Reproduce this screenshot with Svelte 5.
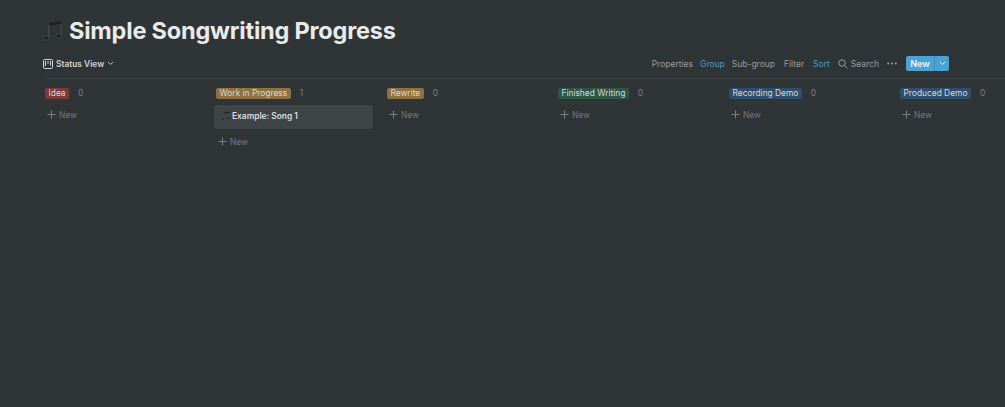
<script>
  let columns = [
    { name: "Idea", color: "#7b3a3c", cards: [] },
    { name: "Work in Progress", color: "#8d7140", cards: ["Example: Song 1"] },
    { name: "Rewrite", color: "#8d7140", cards: [] },
    { name: "Finished Writing", color: "#2f5546", cards: [] },
    { name: "Recording Demo", color: "#2f4d6e", cards: [] },
    { name: "Produced Demo", color: "#2f4d6e", cards: [] }
  ];
  let tools = [
    { label: "Properties" },
    { label: "Group", on: true },
    { label: "Sub-group", wide: true },
    { label: "Filter", wide: true },
    { label: "Sort", on: true }
  ];
</script>

{#snippet note(size)}
  <svg width={size} height={size} viewBox="0 0 24 24">
    <path d="M7.5 19V4.5M21 17V2.5" fill="none" stroke="#4c5053" stroke-width="1.1" />
    <path d="M7.5 3.2L21 1.2v3L7.5 6.2z" fill="#241f1f" />
    <ellipse cx="4.8" cy="19.6" rx="3.2" ry="2.4" fill="#202326" stroke="#5c6064" stroke-width=".6" />
    <ellipse cx="18.2" cy="17.6" rx="3.2" ry="2.4" fill="#202326" stroke="#5c6064" stroke-width=".6" />
  </svg>
{/snippet}

<div class="page">
  <h1><span class="emoji">{@render note(22)}</span>Simple Songwriting Progress</h1>

  <div class="bar">
    <div class="view">
      <svg width="10" height="10" viewBox="0 0 10 10">
        <rect x=".5" y=".5" width="9" height="9" rx="1.2" fill="none" stroke="#d6d7d8" />
        <path d="M2.5 2v5M5 2v3M7.5 2v4.5" stroke="#d6d7d8" fill="none" />
      </svg>
      <span>Status View</span>
      <svg width="7" height="5" viewBox="0 0 7 5"><path d="M1 1l2.5 2.5L6 1" fill="none" stroke="#b8babb" /></svg>
    </div>
    <div class="tools">
      {#each tools as t}
        <span class="tool" class:on={t.on} class:wide={t.wide}>{t.label}</span>
      {/each}
      <span class="search">
        <svg width="10" height="10" viewBox="0 0 10 10">
          <circle cx="4" cy="4" r="3.2" fill="none" stroke="#9a9c9e" />
          <path d="M6.4 6.4L9.5 9.5" stroke="#9a9c9e" />
        </svg>
        Search
      </span>
      <svg class="dots" width="10" height="3" viewBox="0 0 10 3">
        <circle cx="1.2" cy="1.5" r="1" fill="#a3a5a7" />
        <circle cx="5" cy="1.5" r="1" fill="#a3a5a7" />
        <circle cx="8.8" cy="1.5" r="1" fill="#a3a5a7" />
      </svg>
      <div class="new">
        <span class="new-label">New</span>
        <span class="new-arrow">
          <svg width="7" height="5" viewBox="0 0 7 5"><path d="M1 1l2.5 2.5L6 1" fill="none" stroke="#e8f4fa" /></svg>
        </span>
      </div>
    </div>
  </div>

  <div class="board">
    {#each columns as col}
      <div class="col">
        <div class="head">
          <span class="tag" style="background: {col.color}">{col.name}</span>
          <span class="count">{col.cards.length}</span>
        </div>
        {#each col.cards as card}
          <div class="card">{@render note(10)}<span>{card}</span></div>
        {/each}
        <div class="add">
          <svg width="9" height="9" viewBox="0 0 9 9"><path d="M4.5 .5v8M.5 4.5h8" stroke="#7d8082" /></svg>
          New
        </div>
      </div>
    {/each}
  </div>
</div>

<style>
  :global(body) {
    margin: 0;
    background: #2f3437;
    overflow: hidden;
  }
  .page {
    width: 1005px;
    height: 407px;
    overflow: hidden;
    font-family: Inter, "Liberation Sans", sans-serif;
    color: #d6d7d8;
  }
  h1 {
    margin: 0;
    padding: 15px 0 0 42px;
    height: 32px;
    line-height: 32px;
    font-size: 23.5px;
    font-weight: 700;
    letter-spacing: -0.2px;
    color: #e9eaea;
    display: flex;
    align-items: center;
    white-space: nowrap;
  }
  .emoji {
    width: 27px;
    display: flex;
  }
  .bar {
    margin: 0 0 0 43px;
    width: 962px;
    box-sizing: border-box;
    height: 32px;
    display: flex;
    align-items: center;
    justify-content: space-between;
    border-bottom: 1px solid #373c3f;
    padding: 2px 56px 0 0;
  }
  .view {
    display: flex;
    align-items: center;
    gap: 3px;
    font-size: 8.4px;
    font-weight: 600;
    color: #d3d4d5;
  }
  .tools {
    display: flex;
    align-items: center;
    font-size: 8.5px;
    color: #9a9c9e;
  }
  .tool {
    margin-right: 7px;
  }
  .tool.wide {
    margin-right: 9px;
  }
  .tool.on {
    color: #4a9cc9;
  }
  .search {
    display: flex;
    align-items: center;
    gap: 3px;
    margin-left: 1px;
  }
  .dots {
    margin-left: 8px;
  }
  .new {
    margin-left: 9px;
    display: flex;
    height: 15px;
    width: 43px;
    background: #4aa3d6;
    border-radius: 2px;
    color: #edf6fb;
    font-size: 9px;
    font-weight: 600;
    align-items: center;
  }
  .new-label {
    flex: 1;
    text-align: center;
  }
  .new-arrow {
    width: 14px;
    height: 100%;
    display: flex;
    align-items: center;
    justify-content: center;
    border-left: 1px solid #3f8ebc;
  }
  .board {
    display: flex;
    padding: 7px 0 0 43px;
  }
  .col {
    flex: 0 0 171px;
    box-sizing: border-box;
    padding-right: 12px;
  }
  .head {
    height: 14px;
    display: flex;
    align-items: center;
    padding-left: 2px;
    font-size: 8.4px;
  }
  .tag {
    padding: 0 3.5px;
    height: 11px;
    line-height: 11px;
    border-radius: 2px;
    color: #d8dada;
    white-space: nowrap;
  }
  .count {
    margin-left: 9px;
    color: #7d8082;
  }
  .card {
    margin-top: 5px;
    height: 24px;
    box-sizing: border-box;
    padding: 0 0 2px 7px;
    background: #3f4447;
    border-radius: 2px;
    box-shadow: 0 0 1px rgba(0, 0, 0, 0.4);
    display: flex;
    align-items: center;
    gap: 1px;
    font-size: 8.4px;
    font-weight: 600;
    color: #dcdddd;
  }
  .add {
    margin-top: 7px;
    height: 15px;
    display: flex;
    align-items: center;
    gap: 3px;
    padding-left: 4px;
    font-size: 8.4px;
    color: #76797b;
  }
  .card + .add {
    margin-top: 5px;
  }
</style>
